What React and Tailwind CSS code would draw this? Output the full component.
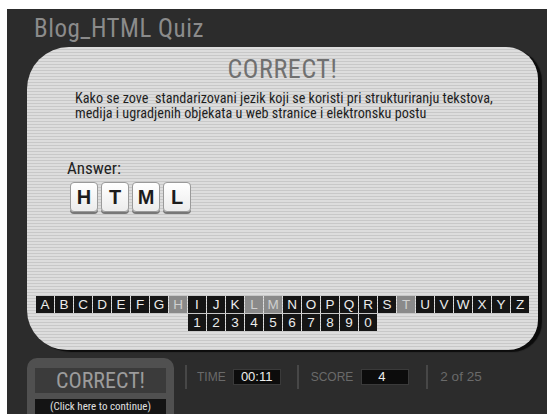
import React from 'react';

const LETTERS = 'ABCDEFGHIJKLMNOPQRSTUVWXYZ'.split('');
const DIGITS = '1234567890'.split('');
const USED = ['H', 'L', 'M', 'T'];
const ANSWER = ['H', 'T', 'M', 'L'];

const narrow = "font-['Roboto_Condensed','Liberation_Sans_Narrow','DejaVu_Sans_Condensed',sans-serif]";

const KeyCell = ({ ch, used }) => (
  <div
    className={`w-[18px] h-[17px] flex items-center justify-center text-[13.5px] leading-none ${
      used ? 'bg-[#8a8a8a] text-[#cfcfcf]' : 'bg-[#151515] text-[#ececec]'
    }`}
  >
    {ch}
  </div>
);

const Tile = ({ ch }) => (
  <div className="w-[28px] h-[30px] rounded-[4px] bg-gradient-to-b from-white to-[#ececec] border border-[#9a9a9a] shadow-[0_2px_0_#777] flex items-center justify-center text-[20px] font-bold text-[#1c1c1c]">
    {ch}
  </div>
);

const Divider = () => <div className="w-[2px] h-[24px] bg-[#474747]" />;

export default function App() {
  return (
    <div className="w-[547px] h-[414px] bg-white pl-[7px] pt-[9px] overflow-hidden font-['Liberation_Sans',Arial,sans-serif]">
      <div className="w-full h-full bg-[#2c2c2c] flex flex-col">
        {/* header */}
        <div className={`shrink-0 h-[38px] pl-[27px] pt-[2px] text-[#8b8b8b] text-[25px] tracking-[0.5px] leading-[36px] ${narrow}`}>
          Blog_HTML Quiz
        </div>

        {/* question card */}
        <div className="shrink-0 ml-[20px] w-[511px] h-[303px] rounded-tl-[42px] rounded-bl-[40px] rounded-tr-[32px] rounded-br-[30px] bg-[repeating-linear-gradient(to_bottom,#dddddd_0px,#dddddd_2px,#c8c8c8_2px,#c8c8c8_3px)] shadow-[4px_2px_1px_#0c0c0c] flex flex-col pt-[7px]">
          <h2 className={`text-center text-[26px] tracking-[0.6px] leading-[30px] text-[#707070] ${narrow}`}>CORRECT!</h2>
          <p className={`mt-[7px] ml-[48px] text-[14.2px] leading-[15px] text-[#1e1e1e] ${narrow}`}>
            Kako se zove&nbsp; standarizovani jezik koji se koristi pri strukturiranju tekstova,
            <br />
            medija i ugradjenih objekata u web stranice i elektronsku postu
          </p>

          <div className={`mt-[37px] ml-[40px] text-[17px] leading-[20px] text-[#222] ${narrow}`}>Answer:</div>
          <div className="mt-[4px] ml-[43px] flex gap-[3px]">
            {ANSWER.map((ch, i) => (
              <Tile key={i} ch={ch} />
            ))}
          </div>

          {/* letter picker */}
          <div className="mt-auto mb-[19px] ml-[9px] flex flex-col gap-px">
            <div className="flex gap-px">
              {LETTERS.map((ch) => (
                <KeyCell key={ch} ch={ch} used={USED.includes(ch)} />
              ))}
            </div>
            <div className="flex gap-px ml-[152px]">
              {DIGITS.map((ch) => (
                <KeyCell key={ch} ch={ch} />
              ))}
            </div>
          </div>
        </div>

        {/* status bar */}
        <div className="flex-1 min-h-0 overflow-hidden flex items-start pt-[8px] pl-[20px]">
          <div className="shrink-0 w-[147px] h-[60px] rounded-t-[10px] bg-[#505050] pt-[10px] px-[8px] flex flex-col gap-[6px]">
            <div className={`h-[25px] bg-[#3b3b3b] flex items-center justify-center text-[22px] text-[#9c9c9c] ${narrow}`}>
              CORRECT!
            </div>
            <div className={`h-[16px] bg-[#141414] flex items-center justify-center text-[11px] text-[#e0e0e0] ${narrow}`}>
              (Click here to continue)
            </div>
          </div>

          <div className="flex items-center h-[34px] mt-[2px]">
            <div className="ml-[11px]"><Divider /></div>
            <span className="ml-[10px] text-[12px] text-[#6a6a6a]">TIME</span>
            <div className="ml-[7px] w-[48px] h-[16px] bg-[#0c0c0c] border border-[#3a3a3a] flex items-center justify-center text-[13px] text-[#eee]">
              00:11
            </div>
            <div className="ml-[16px]"><Divider /></div>
            <span className="ml-[12px] text-[12px] text-[#6a6a6a]">SCORE</span>
            <div className="ml-[8px] w-[48px] h-[16px] bg-[#0c0c0c] border border-[#3a3a3a] flex items-center pl-[16px] text-[13px] text-[#eee]">
              4
            </div>
            <div className="ml-[17px]"><Divider /></div>
            <span className="ml-[12px] text-[13.5px] text-[#6a6a6a]">2 of 25</span>
          </div>
        </div>
      </div>
    </div>
  );
}
